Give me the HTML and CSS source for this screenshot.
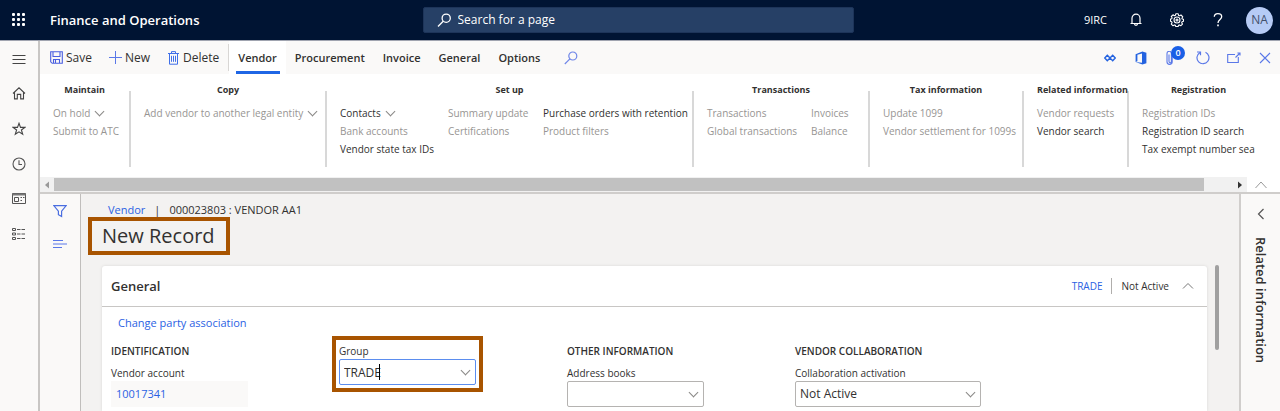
FILE: index.html
```html
<!DOCTYPE html>
<html lang="en">
<head>
<meta charset="utf-8">
<title>New Record - Finance and Operations</title>
<link rel="stylesheet" href="styles.css">
</head>
<body>
<header class="topbar">
  <div class="top-left">
  <button class="icon-btn waffle" aria-label="App launcher">
    <svg width="14" height="14" viewBox="0 0 14 14" fill="#fff"><rect x="0" y="0" width="3" height="3" rx="1"/><rect x="5" y="0" width="3" height="3" rx="1"/><rect x="10" y="0" width="3" height="3" rx="1"/><rect x="0" y="5" width="3" height="3" rx="1"/><rect x="5" y="5" width="3" height="3" rx="1"/><rect x="10" y="5" width="3" height="3" rx="1"/><rect x="0" y="10" width="3" height="3" rx="1"/><rect x="5" y="10" width="3" height="3" rx="1"/><rect x="10" y="10" width="3" height="3" rx="1"/></svg>
  </button>
  <span class="brand">Finance and Operations</span>
  </div>
  <label class="search">
    <svg width="15" height="15" viewBox="0 0 15 15" fill="none" stroke="#fff" stroke-width="1.3"><circle cx="9.2" cy="5.2" r="4.1"/><path d="M6.2 8.2 1 13.5"/></svg>
    <input type="search" placeholder="Search for a page" aria-label="Search for a page">
  </label>
  <div class="top-actions">
    <span class="company">9IRC</span>
    <button class="icon-btn" aria-label="Notifications"><svg width="14" height="14" viewBox="0 0 14 14" fill="none" stroke="#fff" stroke-width="1.2"><path d="M1.5 10.5h11M3 10.5V5.2a4 4 0 0 1 8 0v5.3M5.5 10.8a1.5 1.5 0 0 0 3 0"/></svg></button>
    <button class="icon-btn" aria-label="Settings"><svg width="14" height="14" viewBox="0 0 14 14" fill="none" stroke="#fff" stroke-width="1.1" stroke-linejoin="round"><path d="M5.8.8h2.4l.4 1.6 1 .4L11 2l1.8 1.8-.9 1.4.3.8 1.3.3v2l-1.4.4-.4 1.1.8 1.3-1.6 1.6-1.4-.8-1 .4-.4 1.3H5.8l-.4-1.3-1-.4-1.5.8-1.6-1.6.8-1.4-.4-1L.5 8.2V6l1.3-.3.3-.9-.8-1.3L3 1.8l1.4.9 1-.4z"/><circle cx="7" cy="7" r="3"/><circle cx="7" cy="7" r="1"/></svg></button>
    <button class="icon-btn" aria-label="Help"><svg width="14" height="16" viewBox="0 0 14 16" fill="none" stroke="#fff" stroke-width="1.3"><path d="M3.3 4.8C3.3 2.6 5 1.6 6.9 1.6s3.8 1 3.8 3.1c0 2.6-3.7 3-3.7 6.3"/><path d="M7 12.6v1.7" stroke-width="1.6"/></svg></button>
    <button class="avatar" aria-label="Account">NA</button>
  </div>
</header>

<div class="shell">
  <nav class="rail" aria-label="Main">
    <button class="icon-btn" aria-label="Expand"><svg width="14" height="14" viewBox="0 0 14 14" stroke="#444" fill="none"><path d="M.5 3.5h13M.5 7.5h13M.5 11.5h13"/></svg></button>
    <button class="icon-btn" aria-label="Home"><svg width="14" height="14" viewBox="0 0 14 14" stroke="#444" stroke-width="1.1" fill="none"><path d="M1 6.5 7 .8l6 5.7M2.5 5.4v6.5h2.8V7.4h3.4v4.5h2.8V5.4"/></svg></button>
    <button class="icon-btn" aria-label="Favorites"><svg width="14" height="14" viewBox="0 0 14 14" stroke="#444" stroke-width="1.1" fill="none"><path d="m7 1.3 1.5 4.1h4.3L9.4 8l1.3 4.3L7 9.8l-3.7 2.5L4.6 8 1.2 5.4h4.3z"/></svg></button>
    <button class="icon-btn" aria-label="Recent"><svg width="14" height="14" viewBox="0 0 14 14" stroke="#555" stroke-width="1.1" fill="none"><circle cx="7" cy="7" r="6"/><path d="M7 3.3V7.5h3"/></svg></button>
    <button class="icon-btn" aria-label="Workspaces"><svg width="14" height="14" viewBox="0 0 14 14" stroke="#555" fill="none"><path d="M.5 1.5h13v10H.5zM2.5 5.5h4v4h-4zM8.5 5.5h1.5m1 0h1.5M8.5 8.5h1.5"/><path d="M.5 2.5h13" stroke="#777" stroke-width="2"/></svg></button>
    <button class="icon-btn" aria-label="Modules"><svg width="14" height="14" viewBox="0 0 14 14" stroke="#555" fill="none"><path d="M.5 1.5h3v2h-3zM.5 6h3v2h-3zM.5 10.5h3v2h-3zM5 2.5h3.5m1 0H13M5 7h3.5m1 0H13M5 11.5h3.5m1 0H13"/></svg></button>
  </nav>

  <div class="workspace">
    <div class="actionbar">
      <div class="commands">
        <button class="command"><svg width="13" height="13" viewBox="0 0 13 13" stroke="#4a5fe0" stroke-width="1.1" fill="none"><path d="M.7.7h11.6v11.6H2.2L.7 10.8zM3 .7v4.8h7V.7M3.5 12.2V8.5h6v3.7M5.5 9v3"/></svg>Save</button>
        <button class="command"><svg width="13" height="13" viewBox="0 0 13 13" stroke="#5a78e8" fill="none"><path d="M6.5 0v13M0 6.5h13"/></svg>New</button>
        <button class="command"><svg width="13" height="14" viewBox="0 0 13 14" stroke="#3f6fe8" fill="none"><path d="M1 2.5h11M4.5 2.3V.6h4v1.7M2.5 2.5v10.7h8V2.5M4.5 4.8v6M6.5 4.8v6M8.5 4.8v6"/></svg>Delete</button>
      </div>
      <div class="tabs" role="tablist">
        <button class="tab active" role="tab" aria-selected="true">Vendor</button>
        <button class="tab" role="tab">Procurement</button>
        <button class="tab" role="tab">Invoice</button>
        <button class="tab" role="tab">General</button>
        <button class="tab" role="tab">Options</button>
        <button class="icon-btn tab-search" aria-label="Search commands"><svg width="14" height="14" viewBox="0 0 14 14" stroke="#6f86e8" stroke-width="1.2" fill="none"><circle cx="8.8" cy="5" r="4"/><path d="M5.9 7.9.8 13"/></svg></button>
      </div>
      <div class="window-actions">
        <button class="icon-btn" aria-label="Power Apps"><svg width="12" height="10" viewBox="0 0 12 10" stroke="#2463e0" stroke-width="1.4" fill="none"><path d="M3.3 2.3 6 5 3.3 7.7.8 5zM8.7 2.3 6 5l2.7 2.7L11.2 5z"/></svg></button>
        <button class="icon-btn" aria-label="Open in Office"><svg width="12" height="14" viewBox="0 0 12 14"><path d="M.6 3.2 7.4.6 11.4 1.8v10.4l-4 1.2L.6 11l6.4.8V2.5L2.4 3.8v6.4L.6 11z" fill="#2463e0"/></svg></button>
        <button class="icon-btn attach" aria-label="Attachments, 0"><svg width="14" height="14" viewBox="0 0 14 14" stroke="#5a78e8" stroke-width="1.1" fill="none"><path d="M4 3.5v7a1.2 1.2 0 0 0 2.4 0V2.5a2.2 2.2 0 0 0-4.4 0v8.3a2.6 2.6 0 0 0 5.2 0V4"/></svg><span class="badge">0</span></button>
        <button class="icon-btn" aria-label="Refresh"><svg width="14" height="14" viewBox="0 0 14 14" stroke="#5a78e8" stroke-width="1.2" fill="none"><path d="M9.5 1.3a6 6 0 1 1-5.8.4M1 1h3.5v3.3"/></svg></button>
        <button class="icon-btn" aria-label="Open in new window"><svg width="14" height="12" viewBox="0 0 14 12" stroke="#5a78e8" stroke-width="1.1" fill="none"><path d="M8 2.5H.7v8h10.6V5M8.5 5.5 13 1M10.4 1H13v2.6"/></svg></button>
        <button class="icon-btn" aria-label="Close"><svg width="12" height="12" viewBox="0 0 12 12" stroke="#5a78e8" stroke-width="1.1" fill="none"><path d="m1 1 10 10M11 1 1 11"/></svg></button>
      </div>
    </div>

    <div class="ribbon">
      <div class="groups">
        <section class="group g-maintain"><h2>Maintain</h2><div class="cols">
          <ul><li><button disabled>On hold<i class="chev"></i></button></li><li><button disabled>Submit to ATC</button></li></ul>
        </div></section>
        <section class="group g-copy"><h2>Copy</h2><div class="cols">
          <ul><li><button disabled>Add vendor to another legal entity<i class="chev"></i></button></li></ul>
        </div></section>
        <section class="group g-setup"><h2>Set up</h2><div class="cols">
          <ul><li><button>Contacts<i class="chev"></i></button></li><li><button disabled>Bank accounts</button></li><li><button>Vendor state tax IDs</button></li></ul>
          <ul><li><button disabled>Summary update</button></li><li><button disabled>Certifications</button></li></ul>
          <ul><li><button>Purchase orders with retention</button></li><li><button disabled>Product filters</button></li></ul>
        </div></section>
        <section class="group g-trans"><h2>Transactions</h2><div class="cols">
          <ul><li><button disabled>Transactions</button></li><li><button disabled>Global transactions</button></li></ul>
          <ul><li><button disabled>Invoices</button></li><li><button disabled>Balance</button></li></ul>
        </div></section>
        <section class="group g-tax"><h2>Tax information</h2><div class="cols">
          <ul><li><button disabled>Update 1099</button></li><li><button disabled>Vendor settlement for 1099s</button></li></ul>
        </div></section>
        <section class="group g-related"><h2>Related information</h2><div class="cols">
          <ul><li><button disabled>Vendor requests</button></li><li><button>Vendor search</button></li></ul>
        </div></section>
        <section class="group g-reg"><h2>Registration</h2><div class="cols">
          <ul><li><button disabled>Registration IDs</button></li><li><button>Registration ID search</button></li><li><button>Tax exempt number sea</button></li></ul>
        </div></section>
      </div>
      <div class="ribbon-foot">
        <div class="hscroll">
          <svg width="14" height="14" viewBox="0 0 14 14"><path d="M9 3.5v7L5 7z" fill="#9a9a9a"/></svg>
          <div class="htrack"><div class="hthumb"></div></div>
          <svg width="14" height="14" viewBox="0 0 14 14"><path d="M5 3.5v7L9 7z" fill="#333"/></svg>
        </div>
        <button class="icon-btn collapse" aria-label="Collapse ribbon"><svg width="12" height="8" viewBox="0 0 12 8" stroke="#999" fill="none"><path d="m.5 7 5.5-6 5.5 6"/></svg></button>
      </div>
    </div>

    <div class="content">
      <aside class="filters">
        <button class="icon-btn" aria-label="Filter"><svg width="14" height="14" viewBox="0 0 14 14" stroke="#4a6ee0" stroke-width="1.2" fill="none"><path d="M.8 1.6h12.4L8.6 7.2v5.2l-3.2-1.7V7.2z"/></svg></button>
        <button class="icon-btn" aria-label="Show list"><svg width="14" height="14" viewBox="0 0 14 14" stroke="#5a78e8" stroke-width="1.2" fill="none"><path d="M0 3.5h10M0 7h14M0 10.5h9"/></svg></button>
      </aside>
      <main class="page">
        <div class="form">
          <div class="crumbs"><a href="#">Vendor</a><span class="bar">|</span><span>000023803 : VENDOR AA1</span></div>
          <h1><span class="marked">New Record</span></h1>
          <section class="card">
            <header class="card-head">
              <h2>General</h2>
              <a href="#" class="summary">TRADE</a>
              <span class="summary status">Not Active</span>
              <button class="icon-btn" aria-label="Collapse section"><svg width="12" height="8" viewBox="0 0 12 8" stroke="#777" fill="none"><path d="M1 6.5 6 1.5l5 5"/></svg></button>
            </header>
            <div class="card-body">
              <a href="#" class="party">Change party association</a>
              <div class="fields">
                <div class="field"><h3>IDENTIFICATION</h3>
                  <span class="label">Vendor account</span>
                  <a href="#" class="value">10017341</a>
                </div>
                <div class="field marked-field">
                  <label for="group">Group</label>
                  <div class="combo focused"><input id="group" type="text" value="TRADE"><span class="caret"></span><i class="chev"></i></div>
                </div>
                <div class="field"><h3>OTHER INFORMATION</h3>
                  <label for="books">Address books</label>
                  <div class="combo"><input id="books" type="text"><i class="chev"></i></div>
                </div>
                <div class="field wide"><h3>VENDOR COLLABORATION</h3>
                  <label for="collab">Collaboration activation</label>
                  <div class="combo"><select id="collab"><option>Not Active</option></select><i class="chev"></i></div>
                </div>
              </div>
            </div>
          </section>
        </div>
        <div class="vscroll"></div>
      </main>
      <aside class="related">
        <button class="icon-btn" aria-label="Expand related information"><svg width="8" height="12" viewBox="0 0 8 12" stroke="#555" stroke-width="1.2" fill="none"><path d="M6.5 1 1.5 6l5 5"/></svg></button>
        <span class="related-title">Related information</span>
      </aside>
    </div>
  </div>
</div>
</body>
</html>
```
FILE: styles.css
```css
* { box-sizing: border-box; }
body {
  margin: 0;
  min-height: 100vh;
  display: flex;
  flex-direction: column;
  font: 10px/16px "Open Sans", "Noto Sans", sans-serif;
  color: #323130;
  background: #faf9f8;
}
h1, h2, h3, ul { margin: 0; padding: 0; list-style: none; }
button, input, select { font: inherit; color: inherit; background: none; border: 0; padding: 0; margin: 0; }
a { color: #2b62e3; text-decoration: none; }
svg { display: block; flex: none; }
.icon-btn { display: flex; align-items: center; justify-content: center; }

.topbar {
  display: flex;
  align-items: center;
  height: 41px;
  background: #001433;
  border-bottom: 1px solid #a0a4b0;
  color: #fff;
}
.top-left { flex: 1; display: flex; align-items: center; }
.waffle { width: 38px; }
.brand { padding-left: 12px; font-size: 13px; font-weight: 600; }
.search {
  display: flex;
  align-items: center;
  gap: 6px;
  width: 431px;
  height: 26px;
  margin-left: 3px;
  padding: 0 13px;
  background: #264066;
  border: 1px solid #1d3459;
  border-radius: 2px;
}
.search input { flex: 1; font-size: 12px; outline: 0; }
.search input::placeholder { color: #fff; opacity: 1; }
.top-actions { flex: 1; display: flex; align-items: center; justify-content: flex-end; padding-right: 7px; }
.top-actions .icon-btn { width: 41px; }
.company { padding-right: 8px; font-size: 11px; }
.avatar { width: 27px; height: 27px; margin-left: 8px; border-radius: 50%; background: #b6cbf5; color: #44506b; font-size: 12px; }

.shell { flex: 1; display: flex; }
.rail { flex: none; width: 40px; padding-right: 1px; border-right: 2px solid #c8c6c4; display: flex; flex-direction: column; }
.rail .icon-btn { height: 35px; }
.workspace { flex: 1; min-width: 0; display: flex; flex-direction: column; }

.actionbar { display: flex; height: 33px; background: #faf9f8; font-size: 12px; }
.commands { display: flex; gap: 17px; padding: 0 9px 0 10px; margin: 3px 0; border-right: 1px solid #d8d6d4; }
.command { display: flex; align-items: center; gap: 3px; }
.tabs { display: flex; font-size: 11px; }
.tab { padding: 0 9px; font-weight: 600; }
.tab.active { background: linear-gradient(#1f66e5, #1f66e5) center bottom / 44px 3px no-repeat #fff; }
.tab-search { margin-left: 15px; }
.window-actions { flex: 1; display: flex; justify-content: flex-end; gap: 7px; padding-right: 3px; }
.window-actions .icon-btn { width: 24px; }
.attach { position: relative; }
.badge {
  position: absolute;
  left: 11px;
  top: 5px;
  width: 14px;
  height: 14px;
  border-radius: 50%;
  background: #1a5fe6;
  color: #fff;
  font-size: 9px;
  line-height: 14px;
  font-weight: 600;
}

.ribbon { background: #fff; border-bottom: 2px solid #cfcdcb; padding-top: 8px; }
.groups { display: flex; height: 95px; margin-right: 25px; overflow-x: hidden; }
.group { flex: none; display: flex; flex-direction: column; margin-bottom: 10px; border-right: 2px solid #d8d8d8; margin-top: 9px; padding-left: 13px; }
.group h2 { font-size: 9px; line-height: 16px; font-weight: 700; text-align: center; padding-right: 13px; margin-top: -9px; white-space: nowrap; }
.g-maintain { width: 91px; }
.g-copy { width: 196px; }
.g-setup { width: 367px; }
.g-trans { width: 176px; }
.g-tax { width: 154px; }
.g-related { width: 105px; }
.g-related h2 { padding-right: 0; }
.g-reg { width: 126px; border: 0; }
.group.g-reg h2, .group.g-related h2 { padding-right: 0; }
.cols { display: flex; margin-top: 6px; }
.cols ul { flex: none; }
.cols li { height: 18px; }
.g-setup ul:nth-child(1) { width: 108px; }
.g-setup ul:nth-child(2) { width: 95px; }
.g-trans ul:nth-child(1) { width: 104px; }
.cols button { display: flex; align-items: center; gap: 6px; line-height: 18px; white-space: nowrap; }
.cols button:disabled { color: #979593; }
.chev { flex: none; width: 7px; height: 7px; margin: 0 2px 4px; border: solid #8a8886; border-width: 0 1px 1px 0; transform: rotate(45deg); }
.cols .chev { margin-left: 0; }
.ribbon-foot { display: flex; height: 15px; }
.hscroll { flex: 1; display: flex; align-items: center; background: #f1f1f1; }
.htrack { flex: 1; height: 13px; }
.hthumb { width: calc(100% - 29px); height: 13px; background: #c1c1c1; }
.collapse { width: 32px; margin-right: 1px; padding-right: 4px; }

.content { flex: 1; display: flex; background: #f3f2f1; }
.filters { flex: none; width: 41px; padding-right: 1px; background: #faf9f8; border-right: 1px solid #c0bebc; }
.filters .icon-btn { width: 100%; height: 33px; }
.page { flex: 1; min-width: 0; display: flex; }
.form { flex: 1; min-width: 0; display: flex; flex-direction: column; padding: 8px 8px 0 21px; }
.crumbs { display: flex; gap: 9px; padding-left: 6px; font-size: 11px; }
h1 { font-size: 20px; line-height: 30px; font-weight: 400; margin: 3px 0 15px; }
.marked { display: inline-block; padding: 0 11px 0 10px; margin-left: -10px; outline: 4px solid #a85400; }
.card { flex: 1; background: #fff; border-radius: 3px 3px 0 0; box-shadow: 0 0 3px #d8d6d4; }
.card-head { display: flex; align-items: center; height: 41px; padding: 0 13px 0 9px; border-bottom: 1px solid #c8c6c4; }
.card-head h2 { flex: 1; font-size: 13px; font-weight: 600; }
.status { border-left: 1px solid #b0aeac; margin: 0 13px 0 9px; padding-left: 9px; }
.card-body { padding: 8px 9px 0; }
.party { padding-left: 7px; font-size: 11px; line-height: 16px; display: block; }
.fields { display: flex; padding-top: 12px; }
.field { width: 137px; margin-right: 91px; display: flex; flex-direction: column; }
.field.wide { width: 186px; margin-right: 0; }
h3 { font-size: 10px; line-height: 16px; font-weight: 600; margin-bottom: 6px; white-space: nowrap; }
.field label, .label { line-height: 16px; height: 16px; }
.value { background: #faf9f8; height: 26px; line-height: 26px; padding-left: 5px; font-size: 11px; }
.combo { position: relative; display: flex; align-items: center; height: 26px; padding: 0 4px; border: 1px solid #b5b3b1; border-radius: 2px; background: #fff; font-size: 12px; }
.combo input, .combo select { flex: 1; min-width: 0; height: 24px; outline: 0; appearance: none; }
.combo.focused { border: 1px solid #5b8def; }
.caret { position: absolute; left: 39px; top: 4px; width: 1px; height: 16px; background: #000; }
.marked-field { align-self: flex-start; outline: 4px solid #a85400; outline-offset: 3px; }
.vscroll { flex: none; width: 4px; height: 85px; margin: 71px 20px 0 0; border-radius: 2px; background: #a0a0a0; }
.related { flex: none; width: 41px; background: #faf9f8; border-left: 2px solid #d0cecc; display: flex; flex-direction: column; align-items: center; padding-top: 14px; gap: 17px; }
.related-title { writing-mode: vertical-rl; font-size: 13px; font-weight: 600; line-height: 16px; }
```
